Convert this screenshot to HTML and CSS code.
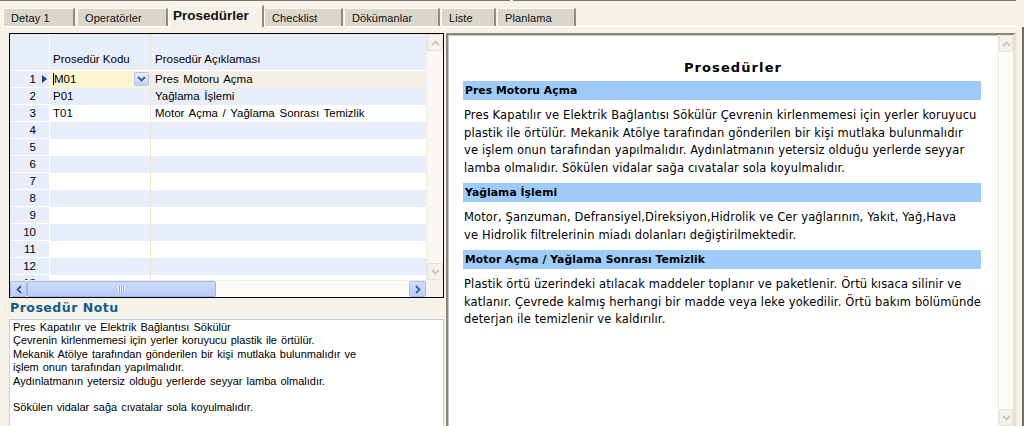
FILE: index.html
```html
<!DOCTYPE html>
<html>
<head>
<meta charset="utf-8">
<link rel="stylesheet" href="styles.css">
</head>
<body>
<div class="topline"><span class="seg1"></span><span class="seg2"></span></div>
<div class="tabs">
  <div class="tab w1">Detay 1</div>
  <div class="tab w2">Operatörler</div>
  <div class="tab active w3">Prosedürler</div>
  <div class="tab w4">Checklist</div>
  <div class="tab w5">Dökümanlar</div>
  <div class="tab w6">Liste</div>
  <div class="tab w7">Planlama</div>
</div>
<div class="content">
  <div class="left">
    <div class="grid">
      <div class="table">
        <div class="row hdr"><div class="num"></div><div class="c1">Prosedür Kodu</div><div class="c2">Prosedür Açıklaması</div></div>
        <div class="row sel"><div class="num">1<span class="ind"></span></div><div class="c1 edit"><span class="caret"></span>M01<span class="combo"><svg width="9" height="6" viewBox="0 0 9 6"><path d="M1 1 L4.5 4.5 L8 1" fill="none" stroke="#3f5a8e" stroke-width="1.8"/></svg></span></div><div class="c2">Pres Motoru Açma</div></div>
        <div class="row alt"><div class="num">2</div><div class="c1">P01</div><div class="c2">Yağlama İşlemi</div></div>
        <div class="row"><div class="num">3</div><div class="c1">T01</div><div class="c2">Motor Açma / Yağlama Sonrası Temizlik</div></div>
        <div class="row alt"><div class="num">4</div><div class="c1"></div><div class="c2"></div></div>
        <div class="row"><div class="num">5</div><div class="c1"></div><div class="c2"></div></div>
        <div class="row alt"><div class="num">6</div><div class="c1"></div><div class="c2"></div></div>
        <div class="row"><div class="num">7</div><div class="c1"></div><div class="c2"></div></div>
        <div class="row alt"><div class="num">8</div><div class="c1"></div><div class="c2"></div></div>
        <div class="row"><div class="num">9</div><div class="c1"></div><div class="c2"></div></div>
        <div class="row alt"><div class="num">10</div><div class="c1"></div><div class="c2"></div></div>
        <div class="row"><div class="num">11</div><div class="c1"></div><div class="c2"></div></div>
        <div class="row alt"><div class="num">12</div><div class="c1"></div><div class="c2"></div></div>
        <div class="row last"><div class="num">13</div><div class="c1"></div><div class="c2"></div></div>
      </div>
      <div class="vscroll">
        <div class="sbtn dis"><svg width="9" height="6" viewBox="0 0 9 6"><path d="M1 5 L4.5 1.5 L8 5" fill="none" stroke="#c9c7ba" stroke-width="1.8"/></svg></div>
        <div class="vtrack"></div>
        <div class="sbtn dis"><svg width="9" height="6" viewBox="0 0 9 6"><path d="M1 1 L4.5 4.5 L8 1" fill="none" stroke="#c9c7ba" stroke-width="1.8"/></svg></div>
      </div>
      <div class="hscroll">
        <div class="hbtn"><svg width="6" height="9" viewBox="0 0 6 9"><path d="M5 1 L1.5 4.5 L5 8" fill="none" stroke="#3f5a8e" stroke-width="1.8"/></svg></div>
        <div class="thumb"><span class="grip"></span></div>
        <div class="htrack"></div>
        <div class="hbtn"><svg width="6" height="9" viewBox="0 0 6 9"><path d="M1 1 L4.5 4.5 L1 8" fill="none" stroke="#3f5a8e" stroke-width="1.8"/></svg></div>
      </div>
      <div class="corner"></div>
    </div>
    <div class="note-label">Prosedür Notu</div>
    <div class="note">Pres Kapatılır ve Elektrik Bağlantısı Sökülür<br>Çevrenin kirlenmemesi için yerler koruyucu plastik ile örtülür.<br>Mekanik Atölye tarafından gönderilen bir kişi mutlaka bulunmalıdır ve<br>işlem onun tarafından yapılmalıdır.<br>Aydınlatmanın yetersiz olduğu yerlerde seyyar lamba olmalıdır.<br><br>Sökülen vidalar sağa cıvatalar sola koyulmalıdır.</div>
  </div>
  <div class="right">
    <div class="doc">
      <h1>Prosedürler</h1>
      <h2>Pres Motoru Açma</h2>
      <p>Pres Kapatılır ve Elektrik Bağlantısı Sökülür Çevrenin kirlenmemesi için yerler koruyucu<br>plastik ile örtülür. Mekanik Atölye tarafından gönderilen bir kişi mutlaka bulunmalıdır<br>ve işlem onun tarafından yapılmalıdır. Aydınlatmanın yetersiz olduğu yerlerde seyyar<br>lamba olmalıdır. Sökülen vidalar sağa cıvatalar sola koyulmalıdır.</p>
      <h2>Yağlama İşlemi</h2>
      <p>Motor, Şanzuman, Defransiyel,Direksiyon,Hidrolik ve Cer yağlarının, Yakıt, Yağ,Hava<br>ve Hidrolik filtrelerinin miadı dolanları değiştirilmektedir.</p>
      <h2>Motor Açma / Yağlama Sonrası Temizlik</h2>
      <p>Plastik örtü üzerindeki atılacak maddeler toplanır ve paketlenir. Örtü kısaca silinir ve<br>katlanır. Çevrede kalmış herhangi bir madde veya leke yokedilir. Örtü bakım bölümünde<br>deterjan ile temizlenir ve kaldırılır.</p>
    </div>
    <div class="vscroll2">
      <div class="sbtn dis"><svg width="9" height="6" viewBox="0 0 9 6"><path d="M1 5 L4.5 1.5 L8 5" fill="none" stroke="#c9c7ba" stroke-width="1.8"/></svg></div>
      <div class="vtrack"></div>
      <div class="sbtn dis"><svg width="9" height="6" viewBox="0 0 9 6"><path d="M1 1 L4.5 4.5 L8 1" fill="none" stroke="#c9c7ba" stroke-width="1.8"/></svg></div>
    </div>
  </div>
</div>
</body>
</html>
```
FILE: styles.css
```css
html, body {
  margin: 0;
  padding: 0;
}
body {
  width: 1024px;
  height: 426px;
  overflow: hidden;
  background: #f4f2e9;
  font-family: "Liberation Sans", Arial, sans-serif;
  font-size: 11px;
  color: #000;
}
.topline {
  display: flex;
  height: 1px;
  width: 1016px;
}
.seg1 { width: 510px; background: #77766c; }
.seg2 { flex: 1; margin-left: 3px; background: #77766c; }

.tabs {
  display: flex;
  align-items: flex-end;
  height: 26px;
  padding-left: 3px;
  box-sizing: border-box;
  border-bottom: 1px solid #ffffff;
}
.tab {
  height: 18px;
  box-sizing: border-box;
  background: #d9d6cc;
  border-top: 1px solid #fbfaf5;
  border-left: 1px solid #fbfaf5;
  border-right: 2px solid #8f8d82;
  padding: 2px 0 0 7px;
  font-family: "Liberation Sans", Arial, sans-serif;
  font-size: 11px;
  line-height: 14px;
  letter-spacing: 0.1px;
  color: #111;
  margin-right: 1px;
}
.tab.active {
  height: 22px;
  margin-bottom: -1px;
  background: #f4f2e9;
  font-weight: bold;
  font-size: 13.5px;
  letter-spacing: 0;
  padding: 3px 0 0 4px;
  border-top: 1px solid #fff;
  border-left: 1px solid #fff;
  margin-right: 0;
  margin-left: -1px;
}
.w1 { width: 72px; }
.w2 { width: 91px; margin-left: 1px; }
.w3 { width: 96px; }
.w4 { width: 79px; }
.w5 { width: 96px; }
.w6 { width: 55px; }
.w7 { width: 79px; }

.content {
  display: flex;
  height: 399px;
  padding-top: 6px;
  box-sizing: border-box;
  border-right: 2px solid #6e6c63;
  width: 1024px;
}
.left {
  margin-left: 9px;
  width: 435px;
  display: flex;
  flex-direction: column;
}
.grid {
  height: 265px;
  box-sizing: border-box;
  border: 1px solid #000;
  display: grid;
  grid-template-columns: 1fr 17px;
  grid-template-rows: 1fr 17px;
  background: #fff;
  font-size: 11.5px;
}
.table {
  overflow: hidden;
  background: #fff;
}
.row {
  display: grid;
  grid-template-columns: 40px 101px 1fr;
  height: 17px;
  line-height: 17px;
}
.row.last { height: 8px; overflow: hidden; }
.row > div { box-sizing: border-box; white-space: nowrap; overflow: hidden; word-spacing: 1.5px; }
.num {
  background: #e8eef9;
  border-right: 1px solid #fff;
  border-bottom: 1px solid #fff;
  text-align: right;
  padding-right: 13px;
  position: relative;
}
.c1 {
  border-right: 1px solid #ece5d2;
  padding-left: 3px;
}
.c2 { padding-left: 4px; }
.row.alt .c1, .row.alt .c2 { background: #e8eef9; }
.row.hdr {
  height: 36px;
  background: #e8eef9;
  border-bottom: 1px solid #fff;
}
.row.hdr > div { height: 35px; line-height: 20px; padding-top: 15px; background: #e8eef9; word-spacing: 0; }
.row.hdr .num { border-bottom: 0; }
.row.sel .c2 { background: #f4f0e3; }
.row.sel .c1 { background: #fdf5d1; position: relative; padding-left: 3px; }
.caret {
  display: inline-block;
  width: 1px;
  height: 12px;
  background: #000;
  vertical-align: -2px;
}
.combo {
  position: absolute;
  right: 1px;
  top: 1px;
  width: 15px;
  height: 14px;
  box-sizing: border-box;
  border: 1px solid #b0c3ef;
  border-radius: 2px;
  background: linear-gradient(#e6eefd, #c2d3fa);
  display: flex;
  align-items: center;
  justify-content: center;
}
.ind {
  position: absolute;
  right: 2px;
  top: 4px;
  width: 0;
  height: 0;
  border-top: 4px solid transparent;
  border-bottom: 4px solid transparent;
  border-left: 5px solid #1d3e8a;
}
.vscroll, .vscroll2 {
  display: flex;
  flex-direction: column;
  background: #f8f7f2;
  border-left: 1px solid #eeece3;
}
.vtrack { flex: 1; }
.sbtn {
  height: 17px;
  box-sizing: border-box;
  border: 1px solid #e5e3d9;
  border-radius: 2px;
  background: #f3f2ec;
  display: flex;
  align-items: center;
  justify-content: center;
}
.hscroll {
  display: flex;
  background: #fbfbf8;
  border-top: 1px solid #eeede6;
}
.hbtn {
  width: 17px;
  box-sizing: border-box;
  border: 1px solid #a8bbea;
  border-radius: 2px;
  background: linear-gradient(#d3e0fd, #b9ccf8);
  display: flex;
  align-items: center;
  justify-content: center;
}
.thumb {
  width: 189px;
  box-sizing: border-box;
  border: 1px solid #9fb4ea;
  border-radius: 2px;
  background: linear-gradient(#cfdcfd, #b8cbfa);
  display: flex;
  align-items: center;
  justify-content: center;
}
.grip {
  width: 7px;
  height: 6px;
  background: repeating-linear-gradient(90deg, #eef3ff 0 1px, #8ea5df 1px 2px);
}
.htrack { flex: 1; }
.corner { background: #f4f2e9; }

.note-label {
  height: 21px;
  box-sizing: border-box;
  padding: 2px 0 0 1px;
  font-family: "DejaVu Sans", Verdana, sans-serif;
  font-weight: bold;
  font-size: 12.5px;
  letter-spacing: 0.5px;
  color: #0f5c8b;
}
.note {
  flex: 1;
  background: #fff;
  border: 1px solid #c6cfdc;
  border-bottom: 0;
  padding: 1px 3px;
  font-size: 11px;
  line-height: 13.4px;
  word-spacing: 1px;
  white-space: nowrap;
}

.right {
  margin-left: 2px;
  width: 570px;
  display: flex;
  box-sizing: border-box;
  border-top: 2px solid #8a887d;
  border-left: 2px solid #8a887d;
  border-right: 3px solid #e6e4da;
  box-shadow: inset 1px 1px 0 #c7c4b8;
  background: #fff;
}
.doc {
  flex: 1;
  padding: 22px 17px 0 15px;
  font-family: "DejaVu Sans", Verdana, sans-serif;
  font-size: 11.5px;
  letter-spacing: 0.13px;
  overflow: hidden;
}
.doc h1 {
  margin: 0 0 5px;
  font-size: 13px;
  letter-spacing: 1.1px;
  text-align: center;
  height: 19px;
  line-height: 21px;
  padding-left: 22px;
}
.doc h2 {
  margin: 0;
  height: 19px;
  line-height: 19px;
  background: #9ecbfa;
  font-size: 10.8px;
  letter-spacing: 0.05px;
  padding-left: 2px;
}
.doc p {
  margin: 7px -12px 6px 0;
  padding-left: 1px;
  line-height: 17.5px;
  white-space: nowrap;
}
.vscroll2 {
  width: 15px;
  flex: none;
  box-sizing: border-box;
  border-left: 1px solid #eae8df;
  background: #fcfcf8;
}
```
